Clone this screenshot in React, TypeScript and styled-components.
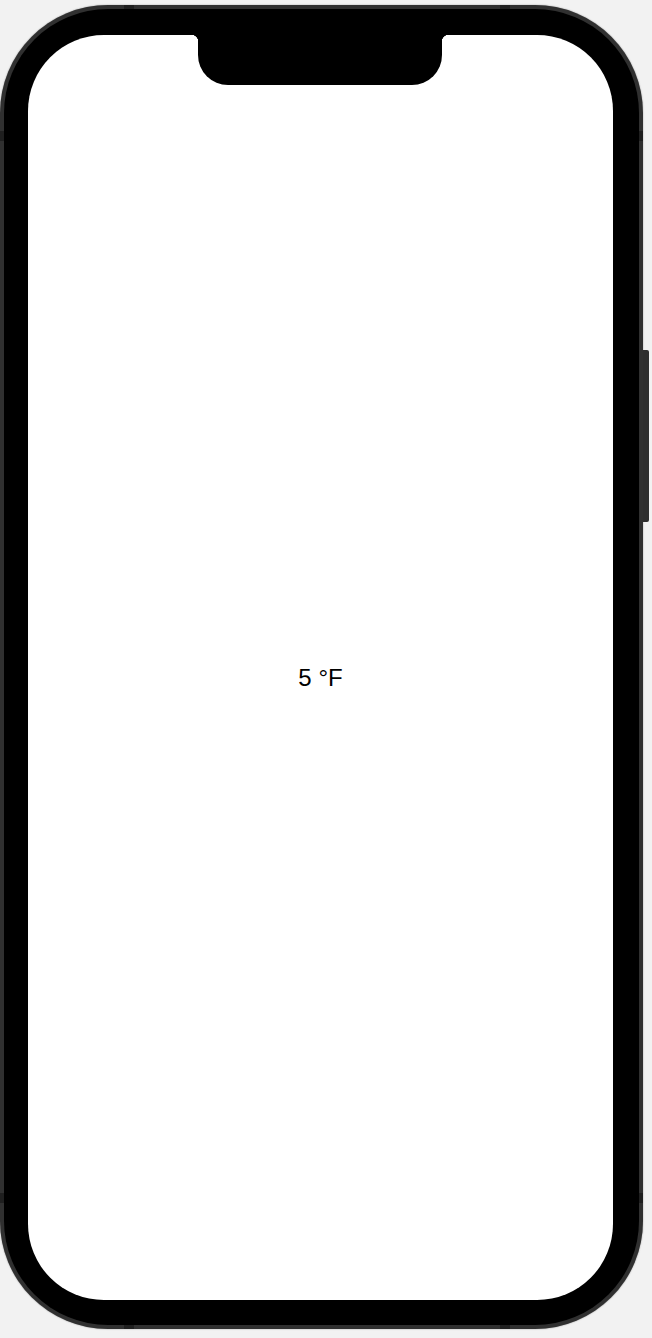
import React from "react";
import styled, { createGlobalStyle } from "styled-components";

const Global = createGlobalStyle`
  html, body { margin: 0; padding: 0; background: #f2f2f2; }
  body { font-family: "Liberation Sans", Arial, sans-serif; }
`;

const Page = styled.div`
  width: 652px;
  height: 1338px;
  padding-top: 5px;
  box-sizing: border-box;
  background: #f2f2f2;
`;

const band = "#1f1f1f";

const Body = styled.div`
  position: relative;
  width: 643px;
  height: 1324px;
  box-sizing: border-box;
  border-radius: 108px;
  background-color: #303030;
  background-image:
    linear-gradient(90deg, transparent 124px, ${band} 124px, ${band} 134px, transparent 134px),
    linear-gradient(90deg, transparent 500px, ${band} 500px, ${band} 510px, transparent 510px),
    linear-gradient(180deg, transparent 126px, ${band} 126px, ${band} 136px, transparent 136px),
    linear-gradient(180deg, transparent 1188px, ${band} 1188px, ${band} 1198px, transparent 1198px);
  box-shadow: 0 0 1.5px rgba(0, 0, 0, 0.45);
  padding: 4px;
`;

const Bezel = styled.div`
  width: 100%;
  height: 100%;
  box-sizing: border-box;
  border-radius: 104px;
  background: #000;
  padding: 26px 26px 25px 24px;
`;

const Screen = styled.div`
  position: relative;
  width: 100%;
  height: 100%;
  border-radius: 76px;
  background: #fff;
  overflow: hidden;
  display: flex;
  align-items: center;
  justify-content: center;
  padding-top: 21px;
  box-sizing: border-box;
`;

const Notch = styled.div`
  position: absolute;
  top: 0;
  left: 170px;
  width: 244px;
  height: 50px;
  background: #000;
  border-radius: 0 0 30px 30px;
  &::before,
  &::after {
    content: "";
    position: absolute;
    top: 0;
    width: 7px;
    height: 7px;
  }
  &::before {
    left: -7px;
    background: radial-gradient(circle at 0 100%, transparent 7px, #000 7.5px);
  }
  &::after {
    right: -7px;
    background: radial-gradient(circle at 100% 100%, transparent 7px, #000 7.5px);
  }
`;

const SideButton = styled.div`
  position: absolute;
  right: -6px;
  top: 345px;
  width: 6px;
  height: 172px;
  background: #2e2e2e;
  border-radius: 0 2px 2px 0;
`;

const Reading = styled.span`
  font-family: "Liberation Sans", Arial, sans-serif;
  font-size: 24px;
  color: #000;
`;

export default function App() {
  return (
    <Page>
      <Global />
      <Body>
        <Bezel>
          <Screen>
            <Notch />
            <Reading>5 °F</Reading>
          </Screen>
        </Bezel>
        <SideButton />
      </Body>
    </Page>
  );
}
